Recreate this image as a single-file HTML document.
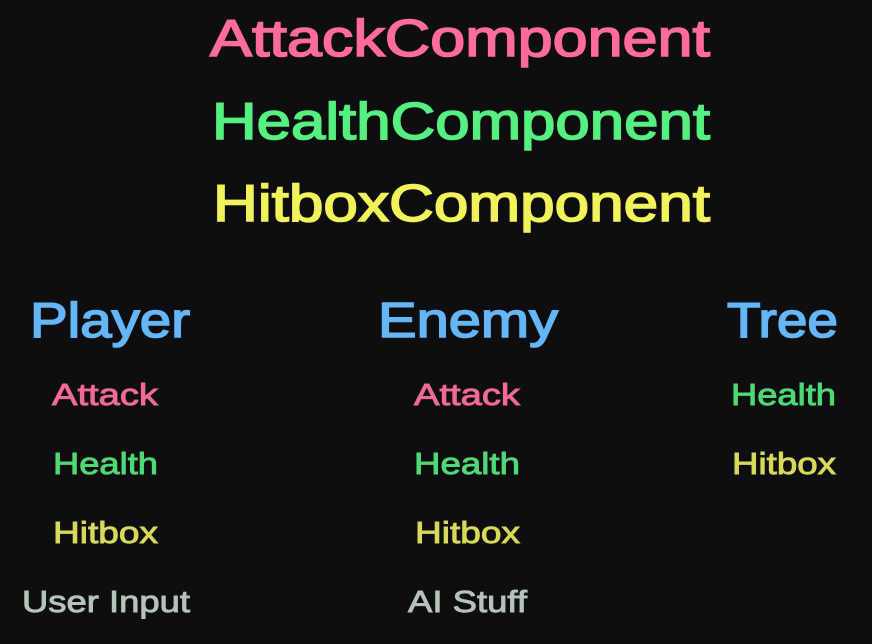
<!DOCTYPE html>
<html><head><meta charset="utf-8"><style>
html,body{margin:0;padding:0;background:#0e0e10;}
svg{display:block}
text{font-family:"Liberation Sans",sans-serif;}
</style></head><body>
<svg width="872" height="644" viewBox="0 0 872 644" xmlns="http://www.w3.org/2000/svg">
<rect width="872" height="644" fill="#0e0e10"/>
<g font-size="52" stroke-width="1.6">
<text x="210" y="56" textLength="500" lengthAdjust="spacingAndGlyphs" fill="#ff6b9a" stroke="#ff6b9a">AttackComponent</text>
<text x="212" y="139" textLength="498" lengthAdjust="spacingAndGlyphs" fill="#55f07f" stroke="#55f07f">HealthComponent</text>
<text x="213" y="221" textLength="497" lengthAdjust="spacingAndGlyphs" fill="#f2f25a" stroke="#f2f25a">HitboxComponent</text>
</g>
<g font-size="49" stroke-width="1.6" fill="#64b6f7" stroke="#64b6f7">
<text x="30" y="337" textLength="160" lengthAdjust="spacingAndGlyphs">Player</text>
<text x="378" y="337" textLength="180" lengthAdjust="spacingAndGlyphs">Enemy</text>
<text x="727" y="337" textLength="111" lengthAdjust="spacingAndGlyphs">Tree</text>
</g>
<g font-size="31" stroke-width="0.9">
<text x="52" y="405" textLength="106" lengthAdjust="spacingAndGlyphs" fill="#f06a93" stroke="#f06a93">Attack</text>
<text x="53" y="474" textLength="105" lengthAdjust="spacingAndGlyphs" fill="#4fd874" stroke="#4fd874">Health</text>
<text x="53" y="543" textLength="105" lengthAdjust="spacingAndGlyphs" fill="#d8d85a" stroke="#d8d85a">Hitbox</text>
<text x="22" y="612" textLength="168" lengthAdjust="spacingAndGlyphs" fill="#b5c4b8" stroke="#b5c4b8">User Input</text>
<text x="414" y="405" textLength="106" lengthAdjust="spacingAndGlyphs" fill="#f06a93" stroke="#f06a93">Attack</text>
<text x="414" y="474" textLength="106" lengthAdjust="spacingAndGlyphs" fill="#4fd874" stroke="#4fd874">Health</text>
<text x="415" y="543" textLength="105" lengthAdjust="spacingAndGlyphs" fill="#d8d85a" stroke="#d8d85a">Hitbox</text>
<text x="408" y="612" textLength="119" lengthAdjust="spacingAndGlyphs" fill="#b5c4b8" stroke="#b5c4b8">AI Stuff</text>
<text x="731" y="405" textLength="105" lengthAdjust="spacingAndGlyphs" fill="#4fd874" stroke="#4fd874">Health</text>
<text x="732" y="474" textLength="104" lengthAdjust="spacingAndGlyphs" fill="#d8d85a" stroke="#d8d85a">Hitbox</text>
</g>
</svg>
</body></html>
